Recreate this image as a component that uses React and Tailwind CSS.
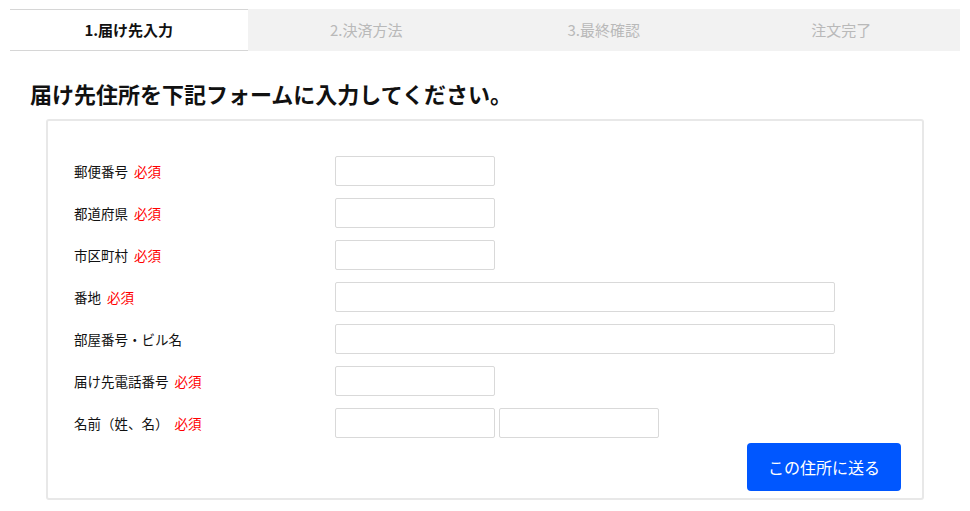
// Checkout step 1: delivery address form

const steps = ['1.届け先入力', '2.決済方法', '3.最終確認', '注文完了'];

const fields = [
  { label: '郵便番号', required: true, size: 'short' },
  { label: '都道府県', required: true, size: 'short' },
  { label: '市区町村', required: true, size: 'short' },
  { label: '番地', required: true, size: 'long' },
  { label: '部屋番号・ビル名', required: false, size: 'long' },
  { label: '届け先電話番号', required: true, size: 'short' },
  { label: '名前（姓、名）', required: true, size: 'pair' },
];

const inputCls = 'h-[30px] border border-[#d9d9d9] rounded-[2px] bg-white px-2 text-[13px] focus:outline-none';

const App = () => {
  return (
    <div
      className="min-h-[511px] bg-white px-[10px] pt-[9px] text-[#111]"
      style={{ fontFamily: '"Noto Sans CJK JP", "Noto Sans", sans-serif' }}
    >
      {/* STEPS */}
      <div className="grid grid-cols-4">
        {steps.map((step, i) => (
          <div
            key={step}
            className={`h-[42px] flex items-center justify-center text-[15px] ${
              i === 0
                ? 'bg-white border-y border-[#d6d6d6] font-bold text-[#111]'
                : 'bg-[#f2f2f2] text-[#b9b9b9]'
            }`}
          >
            {step}
          </div>
        ))}
      </div>

      {/* HEADING */}
      <h1 className="mt-[27px] ml-[20px] text-[22px] font-bold leading-[30px]">
        届け先住所を下記フォームに入力してください。
      </h1>

      {/* FORM CARD */}
      <div className="mt-[11px] ml-[36px] w-[878px] border-2 border-[#e8e8e8] rounded-[3px] pt-[35px] pb-[7px] pl-[26px] pr-[21px]">
        <div className="flex flex-col gap-[12px]">
          {fields.map((f) => (
            <div key={f.label} className="flex items-center">
              <div className="w-[261px] text-[13.5px] leading-[30px]">
                {f.label}
                {f.required && <span className="text-[#ff0000] ml-[6px]">必須</span>}
              </div>
              {f.size === 'short' && <input type="text" className={`${inputCls} w-[160px]`} />}
              {f.size === 'long' && <input type="text" className={`${inputCls} w-[500px]`} />}
              {f.size === 'pair' && (
                <div className="flex gap-[4px]">
                  <input type="text" className={`${inputCls} w-[160px]`} />
                  <input type="text" className={`${inputCls} w-[160px]`} />
                </div>
              )}
            </div>
          ))}
        </div>

        <div className="flex justify-end mt-[5px]">
          <button className="w-[154px] h-[48px] bg-[#0057ff] text-white text-[16px] rounded-[4px]">
            この住所に送る
          </button>
        </div>
      </div>
    </div>
  );
};

export default App;
